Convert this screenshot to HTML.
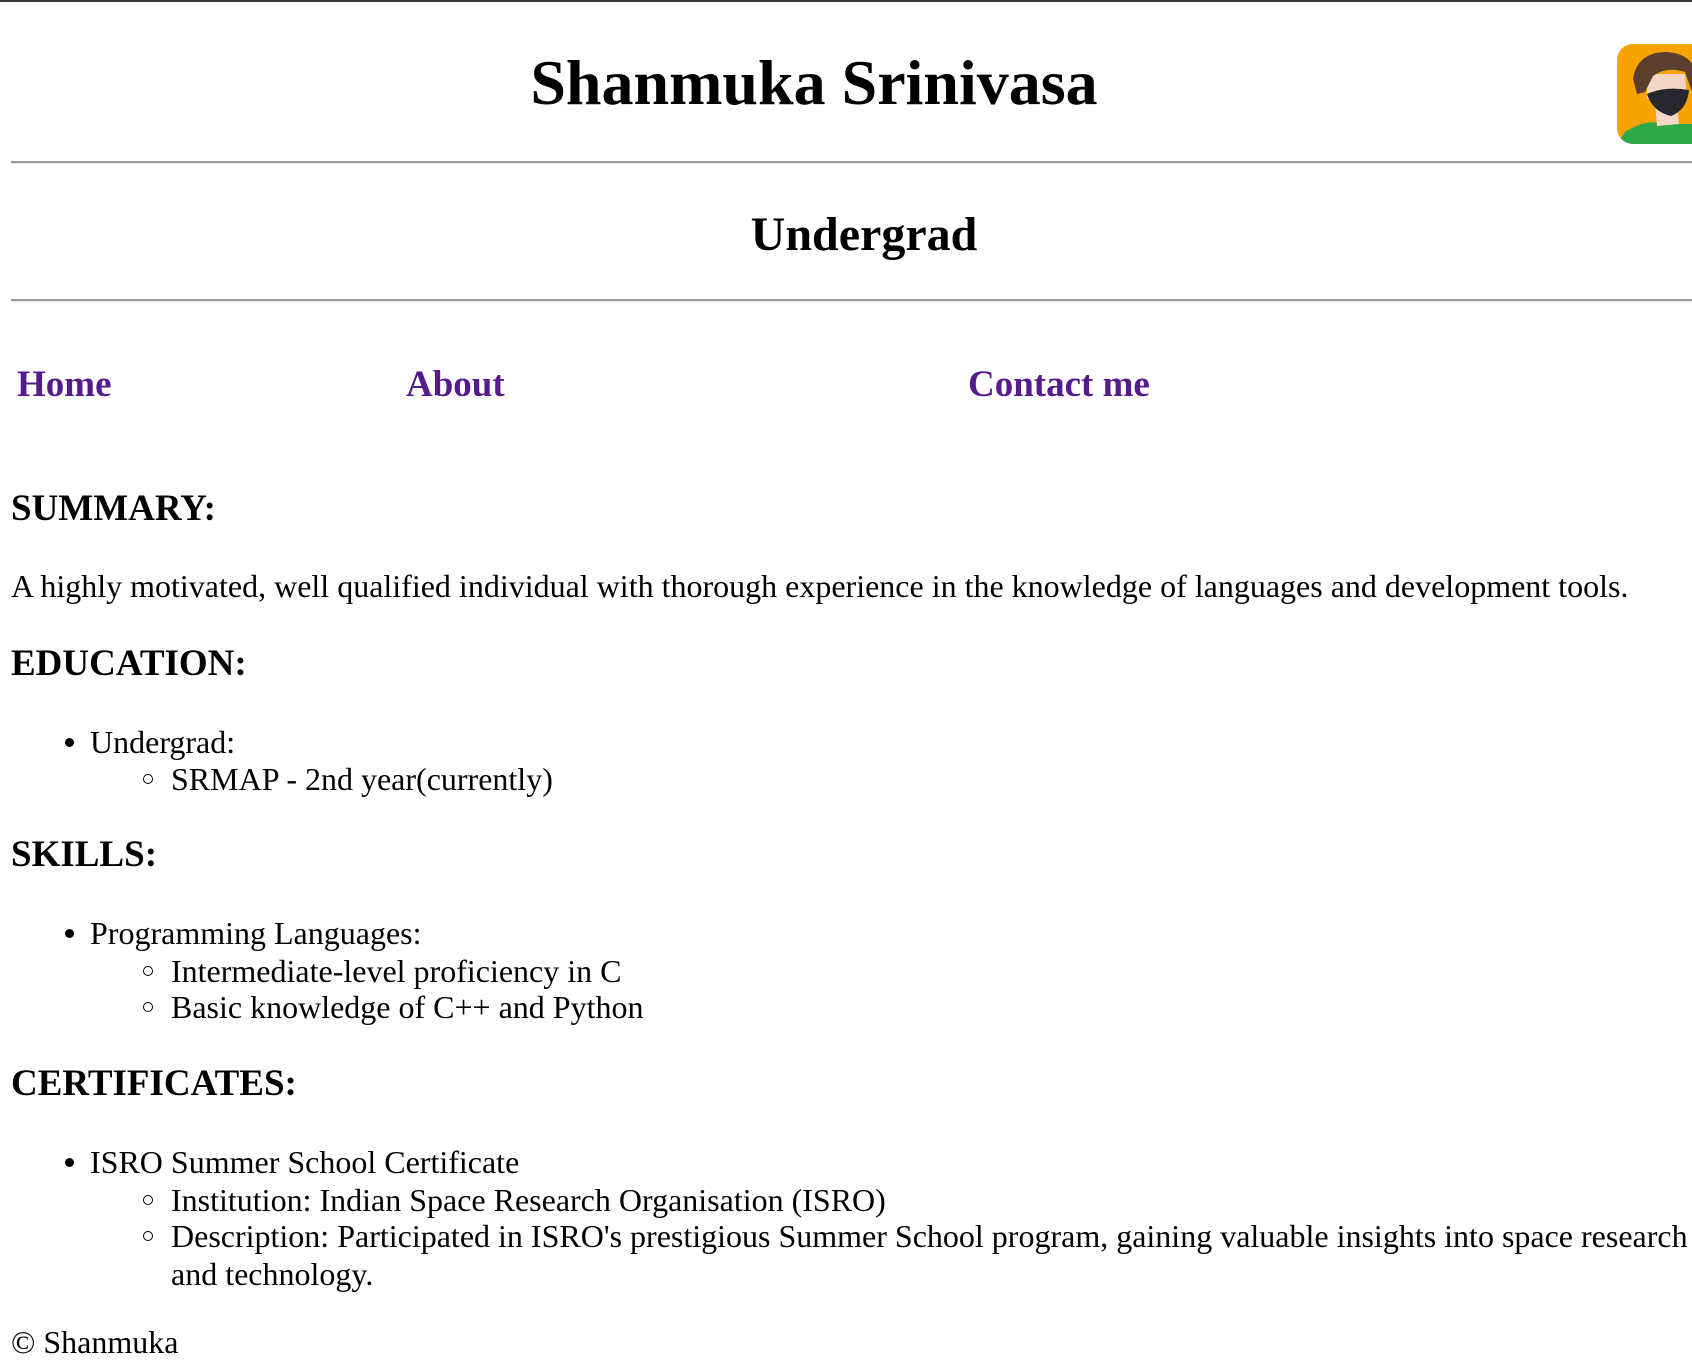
<!DOCTYPE html>
<html><head><meta charset="utf-8"><style>
html,body{margin:0;padding:0;background:#fff;width:1692px;height:1362px;overflow:hidden;position:relative}
.top{position:absolute;left:0;top:0;width:1692px;height:2px;background:#3a3a3a}
.hr{position:absolute;left:11px;width:1681px;height:2px;background:#9a9a9a;border-bottom:1px solid #e6e6e6}
#c{position:absolute;left:0;top:0;width:1692px;height:1362px;font-family:"Liberation Serif",serif;color:#000}
#c div{position:absolute;white-space:nowrap;line-height:1}
.b{font-size:32px}
.h3{font-size:37px;font-weight:bold}
.nav{font-size:37px;font-weight:bold;color:#551a8b}
.c{transform:translateX(-50%)}
#c .d{width:9px;height:9px;border-radius:50%;background:#000}
#c .o{width:8px;height:8px;border-radius:50%;border:1.5px solid #000}
</style></head><body>
<div class="top"></div>
<div id="c">
<div class="c" style="top:51px;left:814px;font-size:64px;font-weight:bold">Shanmuka Srinivasa</div>
<div class="c" style="top:211px;left:864px;font-size:48px;font-weight:bold">Undergrad</div>
<div class="nav" style="top:366px;left:17px">Home</div>
<div class="nav" style="top:366px;left:406px">About</div>
<div class="nav" style="top:366px;left:968px">Contact me</div>
<div class="h3" style="top:490px;left:11px">SUMMARY:</div>
<div class="b" style="top:570px;left:11px">A highly motivated, well qualified individual with thorough experience in the knowledge of languages and development tools.</div>
<div class="h3" style="top:645px;left:11px">EDUCATION:</div>
<div class="d" style="top:738px;left:65px"></div><div class="b" style="top:726px;left:90px">Undergrad:</div>
<div class="o" style="top:774px;left:143px"></div><div class="b" style="top:763px;left:171px">SRMAP - 2nd year(currently)</div>
<div class="h3" style="top:836px;left:11px">SKILLS:</div>
<div class="d" style="top:929px;left:65px"></div><div class="b" style="top:917px;left:90px">Programming Languages:</div>
<div class="o" style="top:966px;left:143px"></div><div class="b" style="top:955px;left:171px">Intermediate-level proficiency in C</div>
<div class="o" style="top:1002px;left:143px"></div><div class="b" style="top:991px;left:171px">Basic knowledge of C++ and Python</div>
<div class="h3" style="top:1065px;left:11px">CERTIFICATES:</div>
<div class="d" style="top:1158px;left:65px"></div><div class="b" style="top:1146px;left:90px">ISRO Summer School Certificate</div>
<div class="o" style="top:1195px;left:143px"></div><div class="b" style="top:1184px;left:171px">Institution: Indian Space Research Organisation (ISRO)</div>
<div class="o" style="top:1231px;left:143px"></div><div class="b" style="top:1220px;left:171px">Description: Participated in ISRO's prestigious Summer School program, gaining valuable insights into space research</div>
<div class="b" style="top:1258px;left:171px">and technology.</div>
<div class="b" style="top:1326px;left:11px">© Shanmuka</div>
</div>
<div class="hr" style="top:161px"></div>
<div class="hr" style="top:299px"></div>
<svg style="position:absolute;left:1617px;top:44px" width="100" height="100" viewBox="0 0 100 100">
<defs><clipPath id="r"><rect width="100" height="100" rx="16"/></clipPath></defs>
<g clip-path="url(#r)">
<rect width="100" height="100" fill="#f9a300"/>
<path d="M0 100 L8 88 Q30 74 45 80 L75 80 L100 90 L100 100Z" fill="#2fa84a"/>
<path d="M38 60 L60 60 L62 80 L40 82Z" fill="#f5d9c8"/>
<path d="M30 30 L68 30 L70 55 L30 55Z" fill="#f3d5c3"/>
<path d="M16 35 Q20 8 50 8 Q78 10 80 35 L75 48 L68 28 Q50 22 36 32 L28 48 L20 50Z" fill="#5a3e2e"/>
<path d="M30 50 Q48 42 72 46 Q70 66 54 72 Q36 68 30 50Z" fill="#26262c"/>
</g></svg>
</body></html>
